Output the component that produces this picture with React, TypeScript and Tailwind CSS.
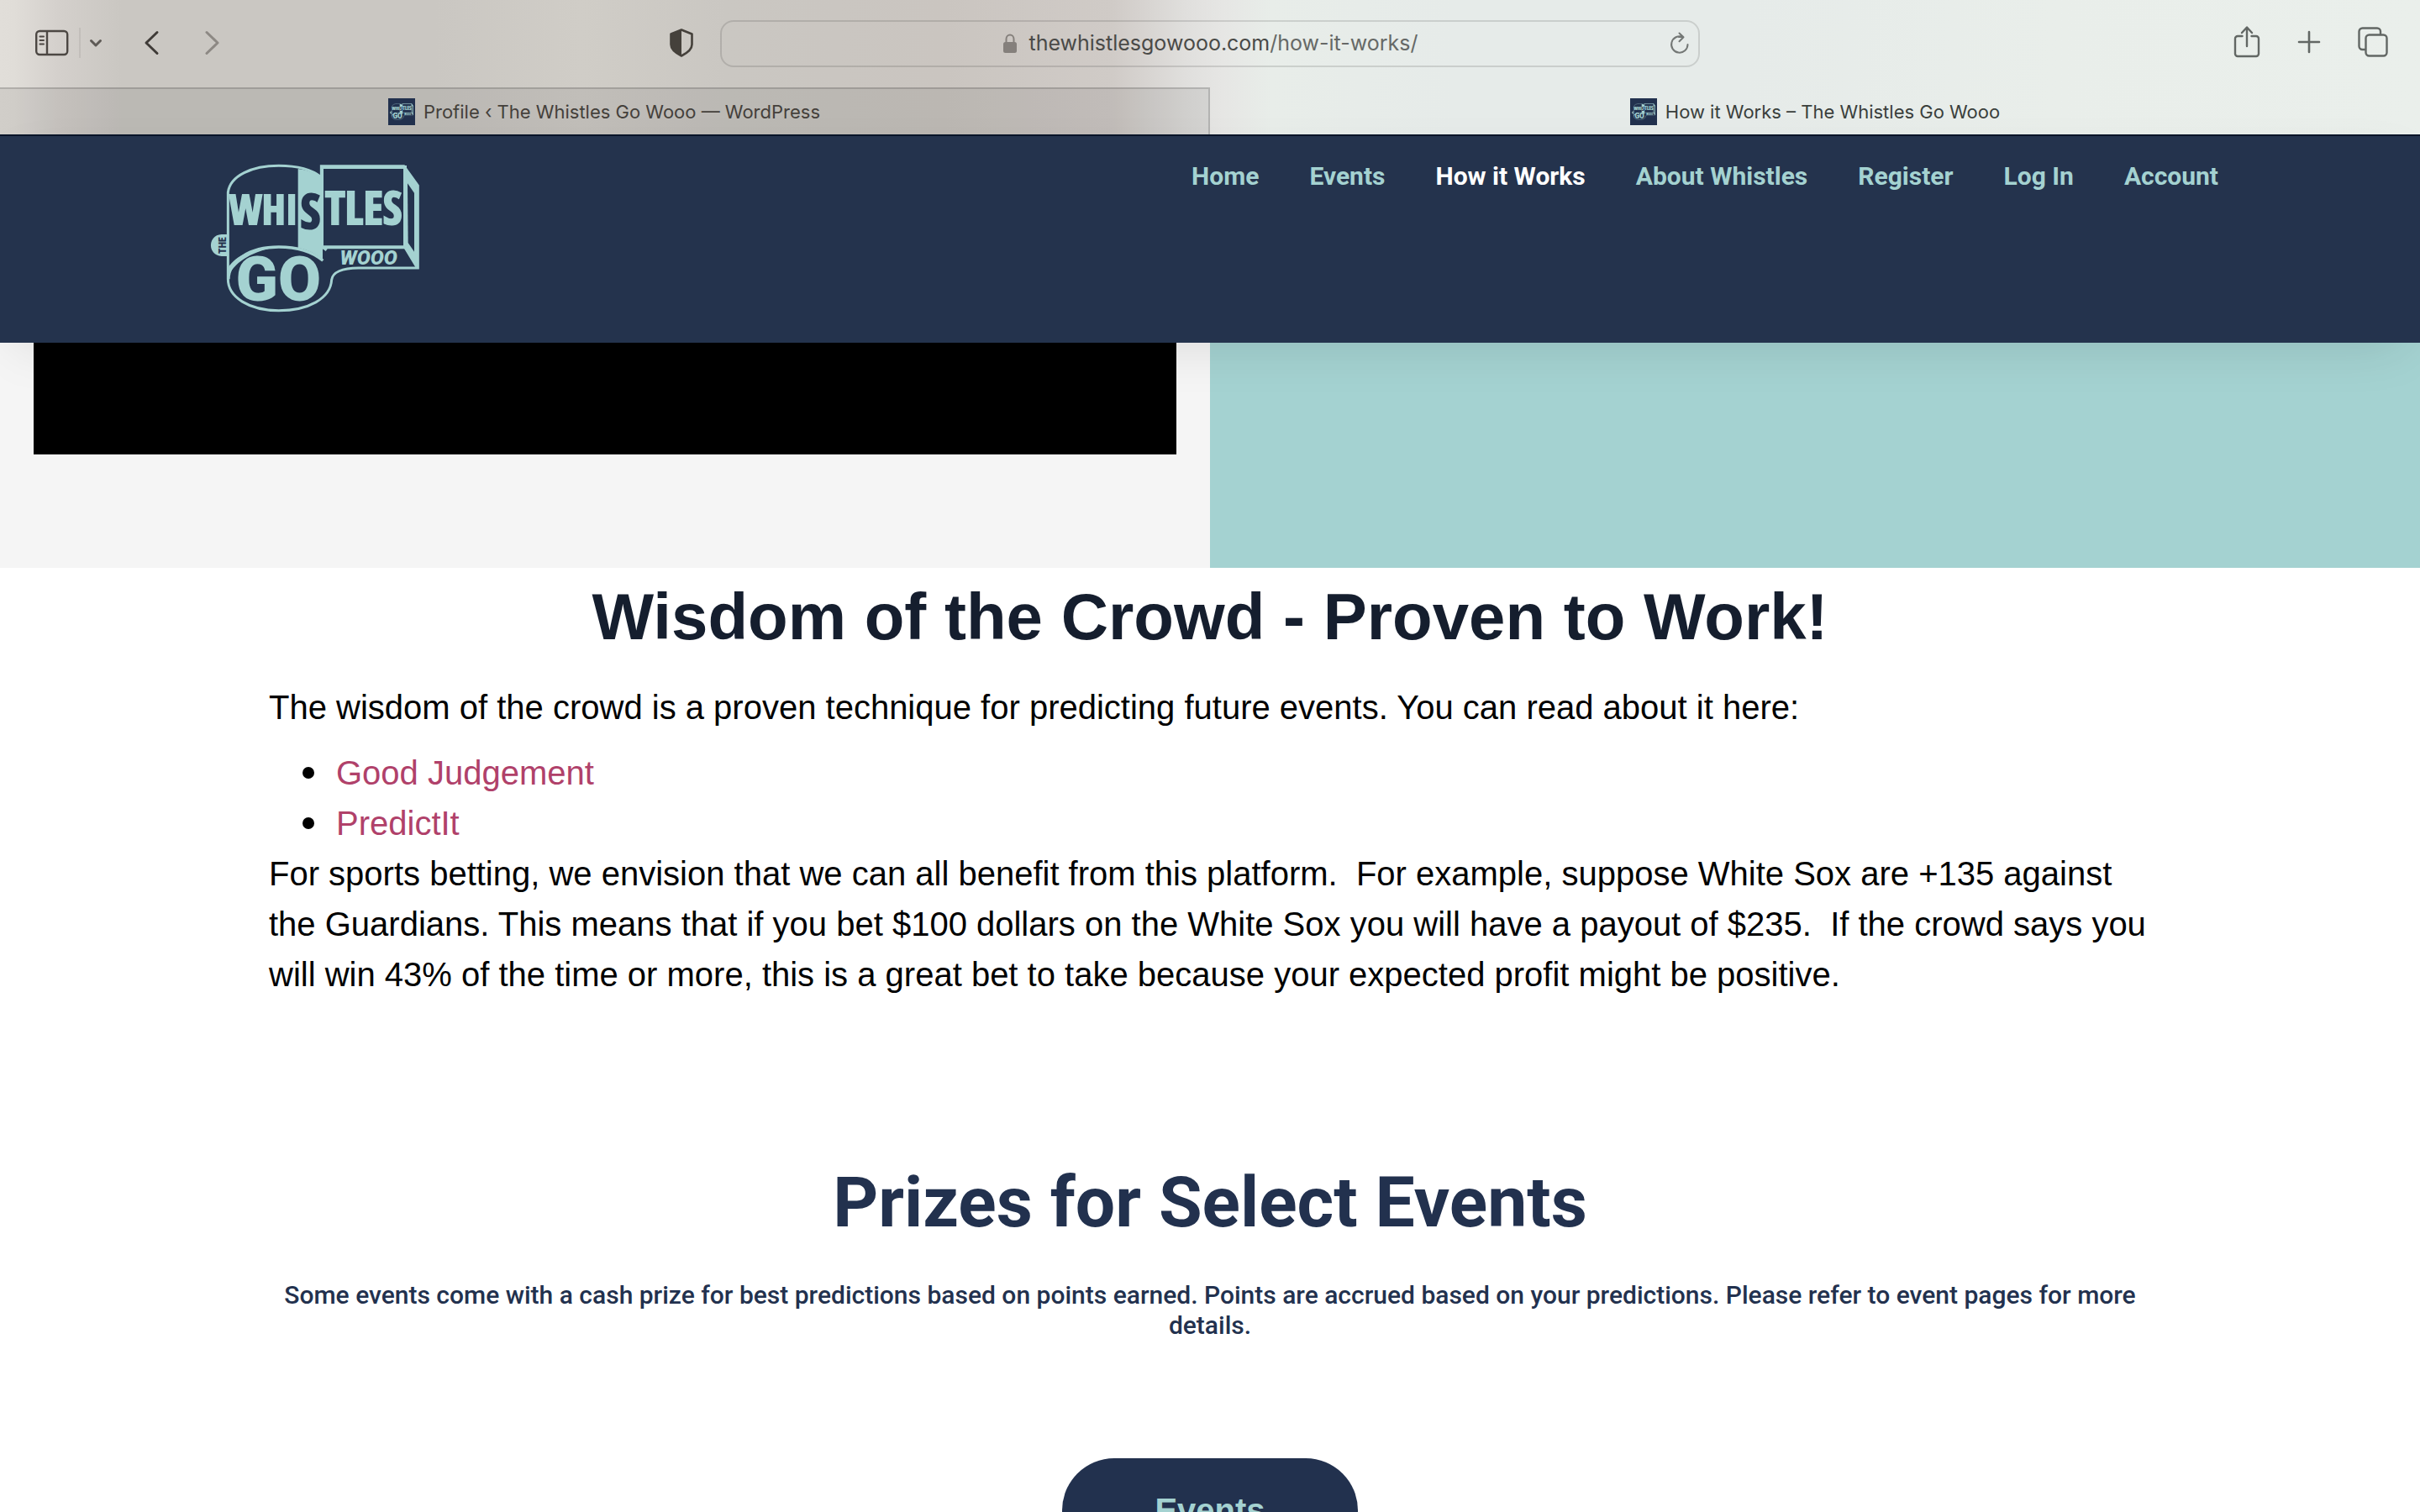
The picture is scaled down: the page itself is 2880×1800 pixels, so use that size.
import React from "react";

const navItems = [
  { label: "Home", active: false },
  { label: "Events", active: false },
  { label: "How it Works", active: true },
  { label: "About Whistles", active: false },
  { label: "Register", active: false },
  { label: "Log In", active: false },
  { label: "Account", active: false },
];

const readingLinks = [
  { label: "Good Judgement", href: "#good-judgement" },
  { label: "PredictIt", href: "#predictit" },
];

function Logo({ className }: { className: string }) {
  return (
    <svg viewBox="60 45 750 535" className={className} role="img" aria-label="The Whistles Go Wooo">
      {/* drum of the whistle */}
      <path
        d="M124 460V150C132 90 210 55 305 55C370 55 425 70 457 96V56H752L802 126V420H590C530 420 497 436 494 462C490 530 410 572 305 572C200 572 124 525 124 460Z"
        fill="none"
        stroke="#a4d2d1"
        strokeWidth="9"
      />
      <path d="M126 460C126 395 200 345 305 345C370 345 425 362 463 394" fill="none" stroke="#a4d2d1" strokeWidth="10" />
      <path d="M124 420C150 375 220 346 305 345C240 352 160 385 130 440Z" fill="#a4d2d1" />
      {/* panel behind the S */}
      <path d="M374 66C410 71 440 82 462 98V390C440 370 410 355 374 348Z" fill="#a4d2d1" />
      {/* mouthpiece */}
      <path d="M459 60V346H756V60Z" fill="none" stroke="#a4d2d1" strokeWidth="12" />
      <path d="M752 54L804 126V424L754 344Z" fill="#a4d2d1" />
      <path d="M765 118L789 152V362L767 330Z" fill="#24334d" />
      <path d="M463 346L476 356M756 346L798 416" stroke="#a4d2d1" strokeWidth="10" />
      {/* lanyard ring */}
      <path d="M122 300H101C50 302 50 376 101 378H122Z" fill="#a4d2d1" />
      <g fontFamily="'Open Sans Condensed', 'Roboto Condensed', sans-serif" fontWeight="700" textAnchor="middle">
        <text x="251" y="264" fontSize="148" fill="#a4d2d1" stroke="#a4d2d1" strokeWidth="6">WHI</text>
        <text x="418" y="278" fontSize="172" fill="#24334d" stroke="#24334d" strokeWidth="6">S</text>
        <text x="608" y="264" fontSize="164" fill="#a4d2d1" stroke="#a4d2d1" strokeWidth="6">TLES</text>
      </g>
      <g fontFamily="Roboto, sans-serif" fontWeight="900" textAnchor="middle" fill="#a4d2d1">
        <text x="304" y="538" fontSize="222">GO</text>
        <text x="626" y="407" fontSize="72" fontStyle="italic">WOOO</text>
      </g>
      <text
        transform="translate(118 339) rotate(-90)"
        fontFamily="'Roboto Condensed', sans-serif"
        fontWeight="800"
        fontSize="36"
        textAnchor="middle"
        fill="#24334d"
      >
        THE
      </text>
    </svg>
  );
}

function Favicon() {
  return (
    <span className="flex size-8 shrink-0 items-center justify-center bg-[#22314e]">
      <Logo className="w-7" />
    </span>
  );
}

function Toolbar() {
  return (
    <div className="grid h-[104px] grid-cols-[1fr_minmax(0,1166px)_1fr] items-center">
      <div className="flex items-center pr-8 pb-0.5 pl-[42px] text-[#4c4743]">
        <button aria-label="Show sidebar">
          <svg className="h-8 w-10" viewBox="0 0 40 32" fill="none" stroke="currentColor" strokeWidth="2.4">
            <rect x="1.2" y="2" width="37" height="28" rx="4" />
            <path d="M14 2V30" />
            <path d="M5.5 8.5H10M5.5 13H10M5.5 17.5H10" strokeWidth="2" strokeLinecap="round" />
          </svg>
        </button>
        <span className="ml-3 h-9 w-0.5 bg-[#c2beba]" />
        <button aria-label="Tab groups" className="ml-2.5 text-[#5e5a56]">
          <svg className="h-5 w-4" viewBox="0 0 16 20" fill="none" stroke="currentColor" strokeWidth="3" strokeLinecap="round" strokeLinejoin="round">
            <path d="M2.5 7.5L8 13L13.5 7.5" />
          </svg>
        </button>
        <button aria-label="Back" className="ml-12 text-[#3f3b37]">
          <svg className="h-8 w-5" viewBox="0 0 20 32" fill="none" stroke="currentColor" strokeWidth="3" strokeLinecap="round" strokeLinejoin="round">
            <path d="M17 3.5L4 16L17 28.5" />
          </svg>
        </button>
        <button aria-label="Forward" className="ml-[52px] text-[#8d8984]">
          <svg className="h-8 w-5" viewBox="0 0 20 32" fill="none" stroke="currentColor" strokeWidth="3" strokeLinecap="round" strokeLinejoin="round">
            <path d="M4 3.5L17 16L4 28.5" />
          </svg>
        </button>
        <button aria-label="Privacy report" className="ml-auto text-[#45413b]">
          <svg className="h-[34px] w-7" viewBox="0 0 28 34">
            <path d="M14 1.5L26.5 6.5V19C26.5 25 21 29 14 32.5C7 29 1.5 25 1.5 19V6.5Z" fill="none" stroke="currentColor" strokeWidth="2.6" strokeLinejoin="round" />
            <path d="M14 1.5V32.5C7 29 1 25 1 19V6.5Z" fill="currentColor" />
          </svg>
        </button>
      </div>

      <div className="relative flex h-14 items-center justify-center rounded-2xl border-2 border-black/12">
        <svg className="mr-3 h-6 w-5" viewBox="0 0 20 24">
          <rect x="2" y="10" width="16" height="13" rx="2.5" fill="#85807c" />
          <path d="M5.5 11V6.5A4.5 5 0 0 1 14.5 6.5V11" fill="none" stroke="#85807c" strokeWidth="2" />
        </svg>
        <span className="font-['Inter'] text-[25px] text-[#4a4a48]">
          thewhistlesgowooo.com<span className="text-[#666967]">/how-it-works/</span>
        </span>
        <button aria-label="Reload" className="absolute right-2.5 text-[#737775]">
          <svg className="h-7 w-6" viewBox="0 0 24 28" fill="none" stroke="currentColor" strokeWidth="2" strokeLinecap="round" strokeLinejoin="round">
            <path d="M21.5 15A9.7 9.7 0 1 1 15.5 6L10.8 6M11.5 1.5L16.5 6.3L11.5 11.2" />
          </svg>
        </button>
      </div>

      <div className="flex items-center justify-end gap-[42px] pr-[38px] pb-1 text-[#626764]">
        <button aria-label="Share">
          <svg className="h-10 w-8" viewBox="0 0 32 40" fill="none" stroke="currentColor" strokeWidth="2.4" strokeLinecap="round" strokeLinejoin="round">
            <path d="M10.5 13H5A3 3 0 0 0 2 16V34A3 3 0 0 0 5 37H27A3 3 0 0 0 30 34V16A3 3 0 0 0 27 13H21.5M16 25V3M10 9L16 2.5L22 9" />
          </svg>
        </button>
        <button aria-label="New tab">
          <svg className="size-8" viewBox="0 0 32 32" fill="none" stroke="currentColor" strokeWidth="2.6" strokeLinecap="round">
            <path d="M16 4V28M4 16H28" />
          </svg>
        </button>
        <button aria-label="Tab overview">
          <svg className="size-9" viewBox="0 0 36 36" fill="none" stroke="currentColor" strokeWidth="2.4" strokeLinejoin="round">
            <rect x="9.5" y="9.5" width="25" height="25" rx="4" />
            <path d="M9 27H5.5A4 4 0 0 1 1.5 23V5.5A4 4 0 0 1 5.5 1.5H23A4 4 0 0 1 27 5.5V9" />
          </svg>
        </button>
      </div>
    </div>
  );
}

function TabBar() {
  return (
    <div className="grid h-14 grid-cols-2 font-['Inter'] text-[22px]">
      <button className="flex items-center justify-center gap-2.5 border-t-2 border-r-2 border-black/15 bg-black/7 text-[#44403b]">
        <Favicon />
        Profile ‹ The Whistles Go Wooo — WordPress
      </button>
      <button className="flex items-center justify-center gap-2.5 pt-0.5 text-[#3a3f3c]">
        <Favicon />
        How it Works – The Whistles Go Wooo
      </button>
    </div>
  );
}

export default function App() {
  return (
    <div className="flex h-screen flex-col overflow-hidden bg-white">
      <div className="shrink-0 bg-[linear-gradient(90deg,#e1ded9_0%,#e0ddd8_0.6%,#d4d0cc_2.4%,#cac7c2_5%,#cac7c2_18%,#d0cdc7_24%,#cac7c2_30%,#cac5c0_39%,#d0cbc7_46%,#e0dfdd_49%,#e6e6e4_50.5%,#e8ede9_52.5%,#e6ebe9_60%,#e6ebe9_72%,#e9eeea_85%,#eaefeb_100%)]">
        <Toolbar />
        <TabBar />
      </div>

      <header className="relative z-10 shrink-0 border-t-2 border-[#071428] bg-[#24334d] shadow-[0_20px_60px_-20px_rgba(0,0,0,0.13)]">
        <div className="mx-auto flex max-w-[2400px] items-start justify-between pt-[30px] pb-9">
          <a href="#home" className="mt-0.5 ml-2.5">
            <Logo className="w-[250px]" />
          </a>
          <nav className="flex gap-[60px] font-['Roboto'] text-[30px] leading-9 font-bold">
            {navItems.map((item) => (
              <a key={item.label} href="#nav" className={item.active ? "text-white" : "text-[#a4d2d1]"}>
                {item.label}
              </a>
            ))}
          </nav>
        </div>
      </header>

      <main className="min-h-0 flex-1 overflow-hidden">
        <section className="grid grid-cols-2">
          <div className="bg-[#f5f5f5] px-10 pb-[135px]">
            <div className="h-[133px] bg-black" />
          </div>
          <div className="bg-[#a4d2d1]" />
        </section>

        <section className="mx-auto max-w-[2240px] font-['Liberation_Sans'] text-[40px] leading-[60px] text-black">
          <h2 className="pt-2.5 text-center text-[78px] leading-[96px] font-bold text-[#151e2e]">
            Wisdom of the Crowd - Proven to Work!
          </h2>
          <p className="mt-[30px]">
            The wisdom of the crowd is a proven technique for predicting future events. You can read about it here:
          </p>
          <ul className="mt-[18px] pl-10">
            {readingLinks.map((link) => (
              <li
                key={link.label}
                className="flex items-center gap-[26px] before:size-3.5 before:rounded-full before:bg-black before:content-['']"
              >
                <a href={link.href} className="text-[#b0416a]">
                  {link.label}
                </a>
              </li>
            ))}
          </ul>
          <p>
            For sports betting, we envision that we can all benefit from this platform.&nbsp; For example, suppose White
            Sox are +135 against the Guardians. This means that if you bet $100 dollars on the White Sox you will have a
            payout of $235.&nbsp; If the crowd says you will win 43% of the time or more, this is a great bet to take
            because your expected profit might be positive.
          </p>
        </section>

        <section className="mx-auto flex max-w-[2240px] flex-col items-center pt-[200px] text-center font-['Roboto'] text-[#22314e]">
          <h2 className="text-[84px] leading-[84px] font-bold">Prizes for Select Events</h2>
          <p className="mt-[50px] text-[30px] leading-9 font-medium">
            Some events come with a cash prize for best predictions based on points earned. Points are accrued based on
            your predictions. Please refer to event pages for more details.
          </p>
          <a
            href="#events"
            className="mt-[140px] rounded-[64px] bg-[#22314e] px-[110px] py-[38px] font-['Liberation_Sans'] text-[40px] leading-[48px] font-bold text-[#a4d2d1]"
          >
            Events
          </a>
        </section>
      </main>
    </div>
  );
}
